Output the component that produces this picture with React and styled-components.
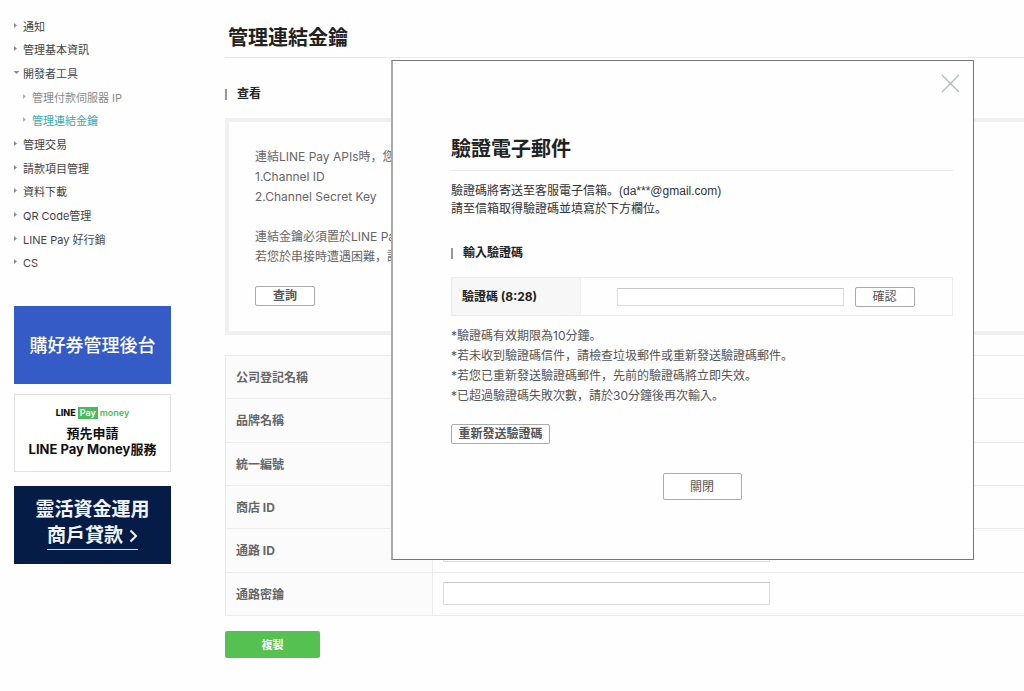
import React from "react";
import styled, { createGlobalStyle } from "styled-components";

const GlobalStyle = createGlobalStyle`
  *, *::before, *::after { box-sizing: border-box; }
  body {
    margin: 0;
    background: #fefefe;
    color: #666;
    font-family: Inter, "Noto Sans CJK JP", sans-serif;
    font-size: 12px;
    line-height: 20px;
  }
  h1, h2, h3, p, ul { margin: 0; padding: 0; }
  a { color: inherit; text-decoration: none; }
  button, input { font: inherit; margin: 0; }
`;

const Page = styled.div`
  display: flex;
  min-height: 100vh;
  overflow: hidden;
`;

const Sidebar = styled.aside`
  flex: 0 0 225px;
  padding: 15px 54px 0 14px;
`;

const NavList = styled.ul`
  display: grid;
  grid-auto-rows: 1fr;
  height: 260px;
  list-style: none;
`;

const NavItem = styled.li`
  display: flex;
  align-items: center;
  padding-left: ${(p) => (p.$sub ? 9 : 0)}px;
  font-size: 11px;
  line-height: 20px;
  white-space: nowrap;
  color: ${(p) => (p.$active ? "#3aabaf" : p.$sub ? "#8a8a8a" : "#444")};
`;

const Marker = styled.svg`
  flex: none;
  width: 5px;
  height: 5px;
  margin: 0 4px 3px 0;
  fill: ${(p) => (p.$sub ? "#b4b4b4" : "#8c8c8c")};
  overflow: visible;
`;

const Banners = styled.div`
  display: flex;
  flex-direction: column;
  margin-top: 31px;
`;

const Banner = styled.a`
  display: flex;
  flex-direction: column;
  align-items: center;
  justify-content: center;
  height: 78px;
  white-space: nowrap;
`;

const VoucherBanner = styled(Banner)`
  margin-bottom: 10px;
  padding-top: 2px;
  background: #345bc6;
  color: #fff;
  font-size: 18px;
  font-weight: 500;
`;

const MoneyBanner = styled(Banner)`
  margin-bottom: 14px;
  padding-bottom: 2px;
  border: 1px solid #e2e2e2;
  background: #fff;
  color: #111;
  font-size: 13px;
  font-weight: 700;
  line-height: 16px;
`;

const LoanBanner = styled(Banner)`
  padding-bottom: 3px;
  background: #041c46;
  color: #f2f5fa;
  font-size: 19px;
  font-weight: 700;
  line-height: 26px;
`;

const LoanLink = styled.span`
  display: flex;
  align-items: center;
  gap: 6px;
  border-bottom: 1px solid #d5dbe6;
`;

const Brand = styled.span`
  display: flex;
  align-items: center;
  gap: 2px;
  margin-bottom: 6px;
  font-size: 9px;
  font-weight: 800;
  line-height: 12px;
`;

const BrandTag = styled.span`
  padding: 0 2px;
  background: #4cba5c;
  color: #fff;
  font-weight: 600;
`;

const BrandWord = styled.span`
  color: #4cba5c;
  font-weight: 600;
`;

const Main = styled.main`
  flex: 1;
  min-width: 0;
  padding-bottom: 32px;
`;

const PageTitle = styled.h1`
  padding: 23px 3px 4px;
  border-bottom: 1px solid #e6e6e6;
  color: #222;
  font-size: 20px;
  font-weight: 700;
  line-height: 30px;
`;

const SectionTitle = styled.h2`
  display: flex;
  align-items: center;
  gap: 10px;
  color: #222;
  font-size: 12px;
  font-weight: 700;
  line-height: 20px;

  &::before {
    content: "";
    width: 2px;
    height: 11px;
    background: #999;
  }
`;

const ViewTitle = styled(SectionTitle)`
  margin: 26px 0 14px;
`;

const InfoBox = styled.section`
  padding: 25px 26px 25px;
  border: 4px solid #f0f0f0;
  border-right: 0;
  white-space: nowrap;
`;

const Button = styled.button`
  display: inline-flex;
  align-items: center;
  justify-content: center;
  width: ${(p) => p.$width}px;
  height: ${(p) => p.$height || 20}px;
  padding: 0;
  border: 1px solid #aaa;
  border-radius: 2px;
  background: #fff;
  color: #555;
  font-size: 12px;
  font-weight: ${(p) => (p.$bold ? 700 : 400)};
  line-height: 18px;
`;

const QueryButton = styled(Button)`
  display: flex;
  margin-top: 19px;
`;

const CopyButton = styled(Button)`
  display: flex;
  margin-top: 15px;
  border: 0;
  background: #54c151;
  color: #fff;
  font-size: 11px;
`;

const DataTable = styled.table`
  width: 100%;
  height: 261px;
  margin-top: 20px;
  border-collapse: collapse;
  table-layout: fixed;
`;

const DataRow = styled.tr`
  height: 43px;
`;

const HeadCell = styled.th`
  width: 207px;
  padding: 2px 10px 0;
  border: 1px solid #ebebeb;
  background: #fbfbfb;
  color: #666;
  font-weight: 700;
  text-align: left;
`;

const DataCell = styled.td`
  padding: 0 10px;
  border: solid #ebebeb;
  border-width: 1px 0;
`;

const TextInput = styled.input`
  display: block;
  width: ${(p) => p.$width}px;
  height: ${(p) => p.$height}px;
  padding: 0 6px;
  border: 1px solid #dcdcdc;
  border-top-color: #c8c8c8;
  border-radius: 0;
  background: #fff;
  color: #444;
`;

const Dialog = styled.div`
  position: absolute;
  top: 60px;
  left: 391px;
  right: 50px;
  padding: 73px 20px 59px 58px;
  border: 1px solid #777;
  border-left: 2px solid #aaa;
  background: #fefefe;
`;

const DismissButton = styled.button`
  position: absolute;
  top: 13px;
  right: 13px;
  display: flex;
  padding: 0;
  border: 0;
  background: none;
`;

const DialogTitle = styled.h2`
  padding-bottom: 6px;
  border-bottom: 1px solid #e9e9e9;
  color: #222;
  font-size: 20px;
  font-weight: 700;
  line-height: 30px;
`;

const Description = styled.p`
  margin: 11px 0 25px;
  color: #333;
  font-family: "Liberation Sans", "Noto Sans CJK JP", sans-serif;
  line-height: 18px;
`;

const CodeRow = styled.div`
  display: flex;
  height: 39px;
  margin-top: 14px;
  border: 1px solid #ebebeb;
`;

const CodeLabel = styled.label`
  display: flex;
  align-items: center;
  flex: 0 0 129px;
  padding-left: 10px;
  border-right: 1px solid #f0f0f0;
  background: #f7f7f7;
  color: #222;
  font-weight: 700;
`;

const CodeField = styled.div`
  display: flex;
  flex: 1;
  align-items: center;
  justify-content: center;
  gap: 11px;
  padding-right: 2px;
`;

const Notes = styled.ul`
  margin: 10px 0 18px;
  list-style: none;
  color: #555;
`;

const DialogFooter = styled.div`
  display: flex;
  justify-content: center;
  margin-top: 29px;
`;

const navItems = [
  { label: "通知" },
  { label: "管理基本資訊" },
  { label: "開發者工具", open: true },
  { label: "管理付款伺服器 IP", sub: true },
  { label: "管理連結金鑰", sub: true, active: true },
  { label: "管理交易" },
  { label: "請款項目管理" },
  { label: "資料下載" },
  { label: "QR Code管理" },
  { label: "LINE Pay 好行銷" },
  { label: "CS" },
];

const fields = [
  { label: "公司登記名稱" },
  { label: "品牌名稱" },
  { label: "統一編號" },
  { label: "商店 ID" },
  { label: "通路 ID", id: "channel-id" },
  { label: "通路密鑰", id: "channel-secret" },
];

export default function App() {
  return (
    <>
      <GlobalStyle />
      <Page>
        <Sidebar>
          <nav>
            <NavList>
              {navItems.map((item) => (
                <NavItem key={item.label} $sub={item.sub} $active={item.active}>
                  <Marker viewBox="0 0 5 5" $sub={item.sub} aria-hidden="true">
                    <path d={item.open ? "M-.5 1h6L2.5 4z" : "M0 0l3 2.5L0 5z"} />
                  </Marker>
                  <a href="#">{item.label}</a>
                </NavItem>
              ))}
            </NavList>
          </nav>
          <Banners>
            <VoucherBanner href="#">購好券管理後台</VoucherBanner>
            <MoneyBanner href="#">
              <Brand>
                LINE
                <BrandTag>Pay</BrandTag>
                <BrandWord>money</BrandWord>
              </Brand>
              <span>預先申請</span>
              <span>LINE Pay Money服務</span>
            </MoneyBanner>
            <LoanBanner href="#">
              <span>靈活資金運用</span>
              <LoanLink>
                商戶貸款
                <svg width="9" height="14" viewBox="0 0 9 14" fill="none" stroke="currentColor" strokeWidth="2" aria-hidden="true">
                  <path d="M1.5 1.5L7 7l-5.500 5.500" />
                </svg>
              </LoanLink>
            </LoanBanner>
          </Banners>
        </Sidebar>

        <Main>
          <PageTitle>管理連結金鑰</PageTitle>
          <ViewTitle>查看</ViewTitle>
          <InfoBox>
            <p>連結LINE Pay APIs時，您</p>
            <p>1.Channel ID</p>
            <p>2.Channel Secret Key</p>
            <br />
            <p>連結金鑰必須置於LINE Pay</p>
            <p>若您於串接時遭遇困難，請</p>
            <QueryButton type="button" $width={60} $bold>查詢</QueryButton>
          </InfoBox>
          <DataTable>
            <tbody>
              {fields.map((field) => (
                <DataRow key={field.label}>
                  <HeadCell scope="row">
                    {field.id ? <label htmlFor={field.id}>{field.label}</label> : field.label}
                  </HeadCell>
                  <DataCell>
                    {field.id && <TextInput id={field.id} type="text" $width={327} $height={23} />}
                  </DataCell>
                </DataRow>
              ))}
            </tbody>
          </DataTable>
          <CopyButton type="button" $width={95} $height={27} $bold>複製</CopyButton>
        </Main>
      </Page>

      <Dialog role="dialog" aria-labelledby="dialog-title">
        <DismissButton type="button" aria-label="關閉">
          <svg width="19" height="19" viewBox="0 0 19 19" fill="none" stroke="#b4b8c2" strokeWidth="1.3" aria-hidden="true">
            <path d="M1 1l17 17M18 1L1 18" />
          </svg>
        </DismissButton>
        <DialogTitle id="dialog-title">驗證電子郵件</DialogTitle>
        <Description>
          驗證碼將寄送至客服電子信箱。(da***@gmail.com)
          <br />
          請至信箱取得驗證碼並填寫於下方欄位。
        </Description>
        <SectionTitle as="h3">輸入驗證碼</SectionTitle>
        <CodeRow>
          <CodeLabel htmlFor="code">驗證碼 (8:28)</CodeLabel>
          <CodeField>
            <TextInput id="code" type="text" $width={227} $height={18} />
            <Button type="button" $width={60}>確認</Button>
          </CodeField>
        </CodeRow>
        <Notes>
          <li>*驗證碼有效期限為10分鐘。</li>
          <li>*若未收到驗證碼信件，請檢查垃圾郵件或重新發送驗證碼郵件。</li>
          <li>*若您已重新發送驗證碼郵件，先前的驗證碼將立即失效。</li>
          <li>*已超過驗證碼失敗次數，請於30分鐘後再次輸入。</li>
        </Notes>
        <Button type="button" $width={99} $bold>重新發送驗證碼</Button>
        <DialogFooter>
          <Button type="button" $width={79} $height={27}>關閉</Button>
        </DialogFooter>
      </Dialog>
    </>
  );
}
